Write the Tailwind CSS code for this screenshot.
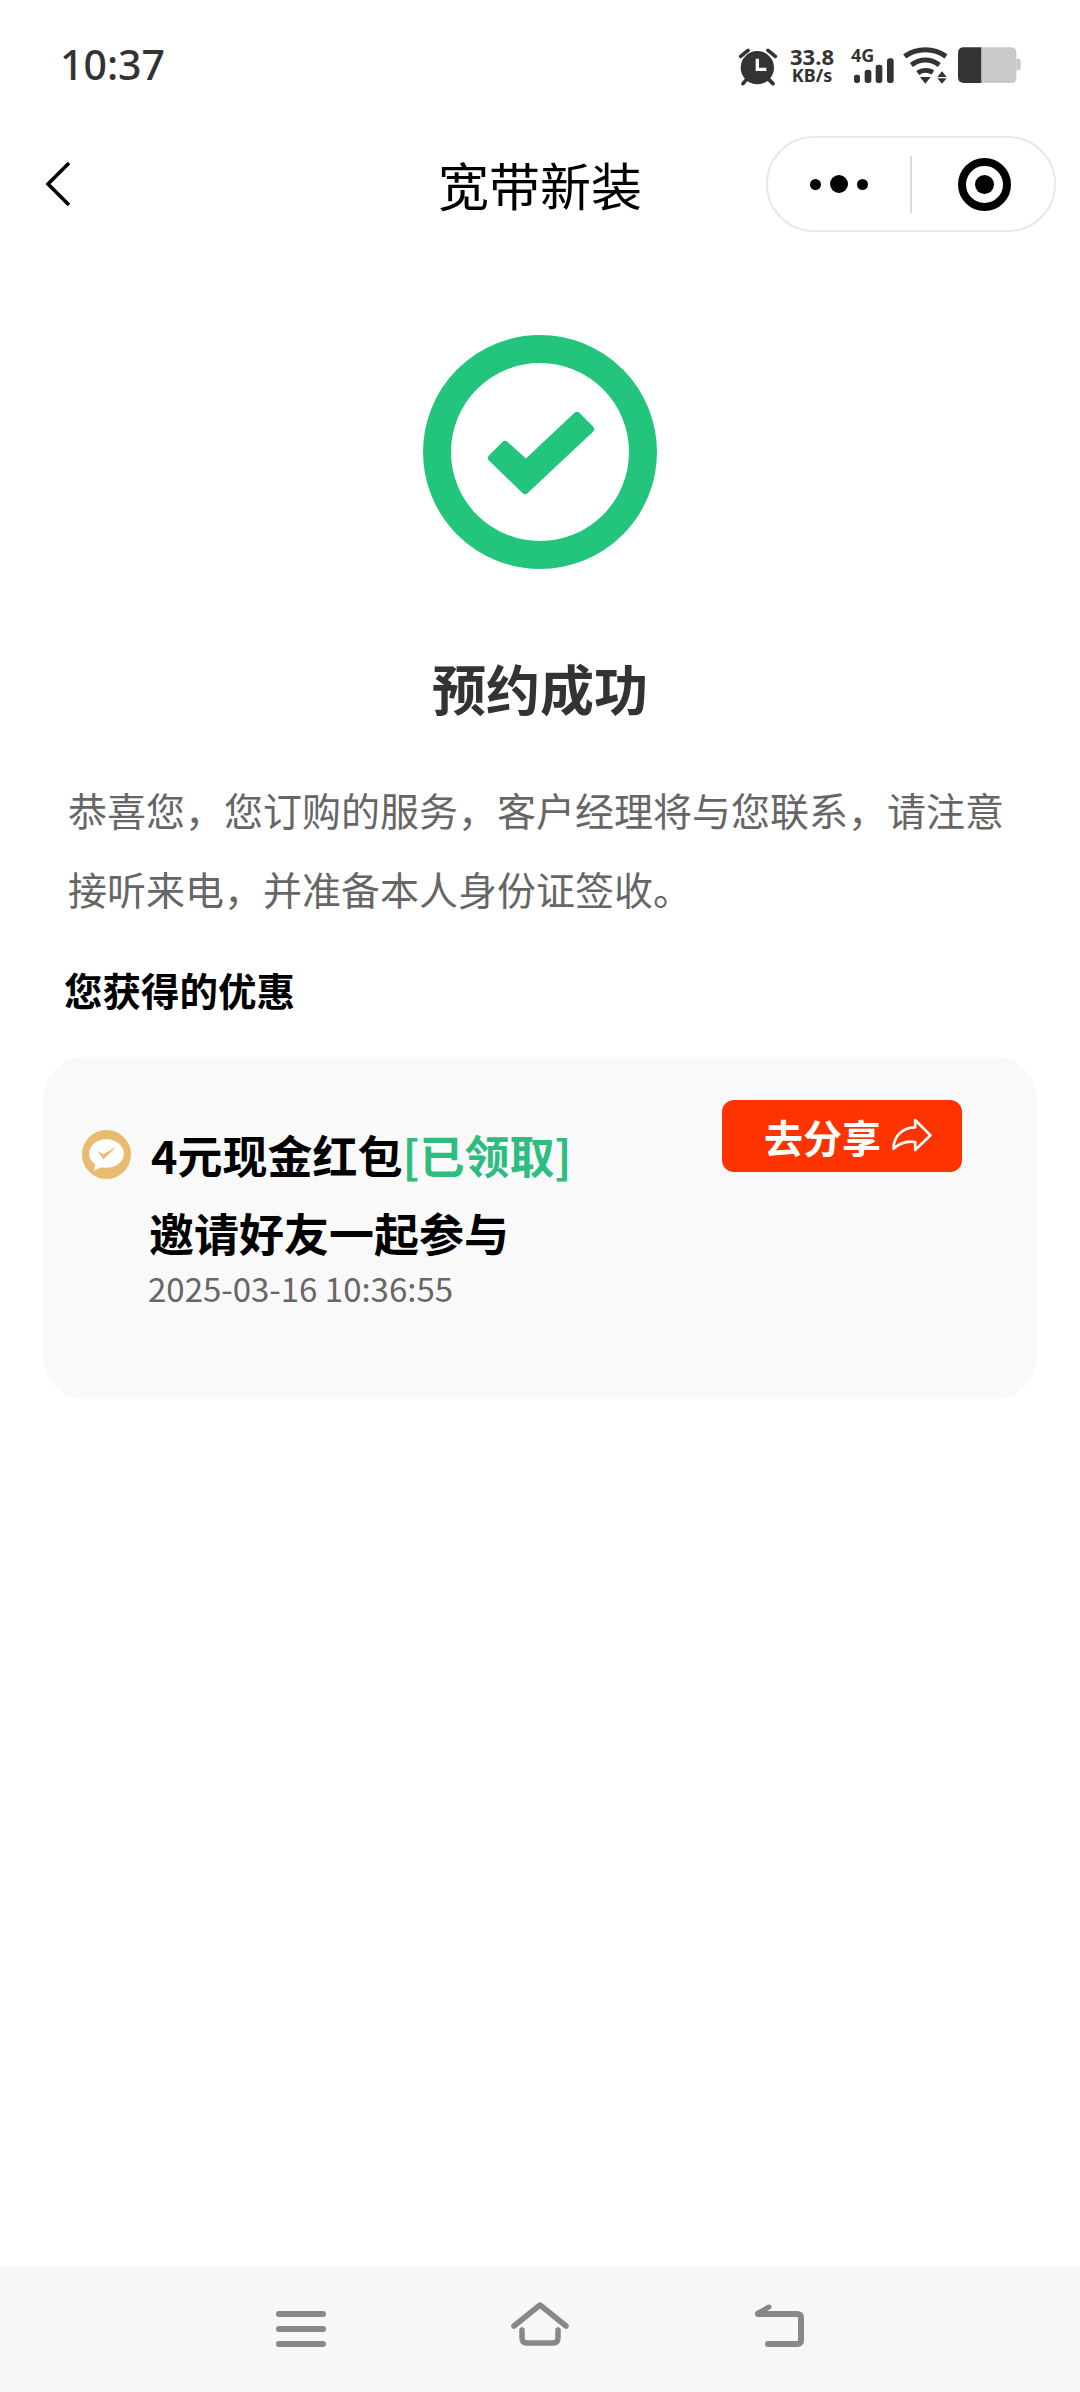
<!DOCTYPE html>
<html lang="zh-CN">
<head>
    <meta charset="UTF-8">
    <meta name="viewport" content="width=device-width, initial-scale=1.0">
    <title>宽带新装</title>
    <script src="https://cdn.jsdelivr.net/npm/@tailwindcss/browser@4"></script>
</head>
<body class="bg-white font-['Noto_Sans_CJK_SC','Noto_Sans',sans-serif]">
    <div class="w-[1080px] h-[2392px] flex flex-col overflow-hidden">
        <!-- status bar -->
        <div class="h-[136px] flex items-start pt-[46px] pl-[60px] pr-[59px] text-[#333]">
            <span class="text-[41px] leading-[36px] font-medium font-['Noto_Sans',sans-serif]">10:37</span>
            <div class="ml-auto flex items-start pt-[1px]">
                <svg class="w-[40px] h-[40px]" viewBox="110 75 120 120" fill="none" stroke="#333">
                    <circle cx="168" cy="137" r="50" fill="#333" stroke="none"/>
                    <path d="M168 110V142H195" stroke="#fff" stroke-width="10"/>
                    <path d="M118 103L140 85M222 103L200 85M125 185L138 170M215 185L200 170" stroke-width="11" stroke-linecap="round"/>
                </svg>
                <div class="ml-[9px] w-[50px] flex flex-col items-center font-['Noto_Sans',sans-serif] font-bold">
                    <span class="text-[22px] leading-[19px]">33.8</span>
                    <span class="text-[18px] leading-[18px]">KB/s</span>
                </div>
                <div class="ml-[14px] w-[44px] flex flex-col font-['Noto_Sans',sans-serif] font-bold">
                    <span class="text-[18px] leading-[16px]">4G</span>
                    <svg class="w-[44px] h-[26px] -mt-[6px]" viewBox="450 110 132 78" fill="#333">
                        <rect x="459" y="163" width="18" height="25" rx="7"/>
                        <rect x="491" y="148" width="20" height="40" rx="8"/>
                        <rect x="524" y="133" width="20" height="55" rx="8"/>
                        <rect x="558" y="114" width="20" height="74" rx="8"/>
                    </svg>
                </div>
                <svg class="ml-[8px] w-[46px] h-[37px]" viewBox="610 78 138 111" fill="none" stroke="#333" stroke-width="15">
                    <path d="M615 106C652 80 702 80 739 106"/>
                    <path d="M635 132C662 113 692 113 719 132"/>
                    <path d="M654 156C668 146 686 146 700 154"/>
                    <path d="M661 168H693L677 188Z" fill="#333" stroke="none"/>
                    <path d="M713 168L727 151L741 168ZM713 172H741L727 188Z" fill="#333" stroke="none"/>
                </svg>
                <svg class="ml-[9px] w-[63px] h-[37px]" viewBox="772 80 190 110">
                    <path d="M843 80H790Q772 80 772 98V170Q772 188 790 188H843Z" fill="#333"/>
                    <path d="M843 80H932Q948 80 948 96V172Q948 188 932 188H843Z" fill="#c9c9c9"/>
                    <path d="M948 115H954Q961 115 961 122V143Q961 150 954 150H948Z" fill="#c9c9c9"/>
                </svg>
            </div>
        </div>

        <!-- nav bar -->
        <div class="h-[96px] grid grid-cols-[1fr_auto_1fr] items-center px-[24px]">
            <svg class="ml-[20px] w-[28px] h-[46px]" viewBox="0 0 28 46" fill="none" stroke="#000" stroke-width="3.600">
                <path d="M25 2L4 23L25 44"/>
            </svg>
            <h1 class="text-[51px] leading-[60px] text-black">宽带新装</h1>
            <div class="justify-self-end w-[290px] h-[96px] rounded-full border-2 border-[#e8e8e8] bg-white flex items-center">
                <div class="w-[142px] flex items-center justify-center gap-[9px]">
                    <span class="w-[11px] h-[11px] rounded-full bg-black"></span>
                    <span class="w-[18px] h-[18px] rounded-full bg-black"></span>
                    <span class="w-[11px] h-[11px] rounded-full bg-black"></span>
                </div>
                <div class="w-[2px] h-[57px] bg-[#dcdcdc]"></div>
                <div class="flex-1 flex items-center justify-center pl-[2px]">
                    <div class="w-[53px] h-[53px] rounded-full border-[8px] border-black flex items-center justify-center">
                        <span class="w-[19px] h-[19px] rounded-full bg-black"></span>
                    </div>
                </div>
            </div>
        </div>

        <!-- content -->
        <div class="flex-1 flex flex-col pt-[102px]">
            <svg class="self-center w-[236px] h-[236px]" viewBox="0 0 236 236">
                <circle cx="118" cy="118" r="103" fill="none" stroke="#23c47c" stroke-width="28"/>
                <path d="M70 124L83 111L104 130L155 82L168 95L103 156Z" fill="#23c47c" stroke="#23c47c" stroke-width="8" stroke-linejoin="round"/>
            </svg>
            <h2 class="mt-[80px] text-center text-[54px] leading-[76px] font-bold text-[#333]">预约成功</h2>
            <p class="mt-[44px] px-[68px] text-[39px] leading-[79px] text-[#666]">恭喜您，您订购的服务，客户经理将与您联系，请注意接听来电，并准备本人身份证签收。</p>
            <h3 class="mt-[33px] pl-[64px] text-[38.500px] leading-[56px] font-bold text-black">您获得的优惠</h3>

            <div class="mt-[40px] mx-[43px] h-[342px] rounded-[42px] bg-[#f9f9f9] flex items-start pt-[43px] pr-[75px]">
                <div class="mt-[25px] flex-1 flex items-start pl-[39px]">
                    <svg class="w-[49px] h-[49px] mt-[5px] shrink-0" viewBox="0 0 48 48">
                        <circle cx="24" cy="24" r="24" fill="#e8bb6f"/>
                        <path d="M24 9C14 9 7 15.500 7 23C7 27.500 9.500 31 13 33.500L11.500 40L19 36.500C21 37 22 37 24 37C34 37 41 30.500 41 23C41 15.500 34 9 24 9Z" fill="#fff"/>
                        <path d="M15 20L21 24L34 16L21 29Z" fill="#e8bb6f"/>
                    </svg>
                    <div class="ml-[20px]">
                        <p class="text-[45px] leading-[60px] font-bold text-black whitespace-nowrap">4元现金红包<span class="text-[#2dbd80]">[已领取]</span></p>
                        <p class="mt-[18px] -ml-[2px] text-[45px] leading-[60px] font-bold text-black whitespace-nowrap">邀请好友一起参与</p>
                        <p class="-ml-[3px] text-[33px] leading-[50px] text-[#666] whitespace-nowrap">2025-03-16 10:36:55</p>
                    </div>
                </div>
                <div class="w-[240px] h-[72px] rounded-[12px] bg-[#ff3300] flex items-center pl-[42px] shrink-0">
                    <span class="text-[39px] leading-[50px] font-bold text-white">去分享</span>
                    <svg class="ml-[10px] w-[42px] h-[36px]" viewBox="635 118 125 108" fill="none" stroke="#fff" stroke-width="8" stroke-linejoin="round">
                        <path d="M642 210C642 170 672 146 707 146V124L753 170L707 214V190C682 186 662 192 642 210Z"/>
                    </svg>
                </div>
            </div>
        </div>

        <!-- bottom nav -->
        <div class="h-[126px] bg-[#f7f7f7] flex items-start justify-center gap-[179px] pt-[36px]">
            <svg class="w-[60px] h-[50px]" viewBox="0 0 60 50" fill="none" stroke="#888" stroke-width="6" stroke-linecap="round">
                <path d="M8 12H52M8 27H52M8 42H52"/>
            </svg>
            <svg class="w-[60px] h-[50px]" viewBox="0 0 60 50" fill="none" stroke="#888" stroke-width="5.500" stroke-linecap="round" stroke-linejoin="round">
                <path d="M4 24L30 3L56 24"/>
                <path d="M12 28V36Q12 41 17 41H43Q48 41 48 36V28"/>
            </svg>
            <svg class="w-[60px] h-[50px]" viewBox="0 0 60 50" fill="none" stroke="#888" stroke-width="6" stroke-linecap="round" stroke-linejoin="round">
                <path d="M9 12H48Q52 12 52 16V38Q52 42 48 42H19"/>
                <path d="M9 11L20 5" stroke-width="5"/>
            </svg>
        </div>
    </div>
</body>
</html>
